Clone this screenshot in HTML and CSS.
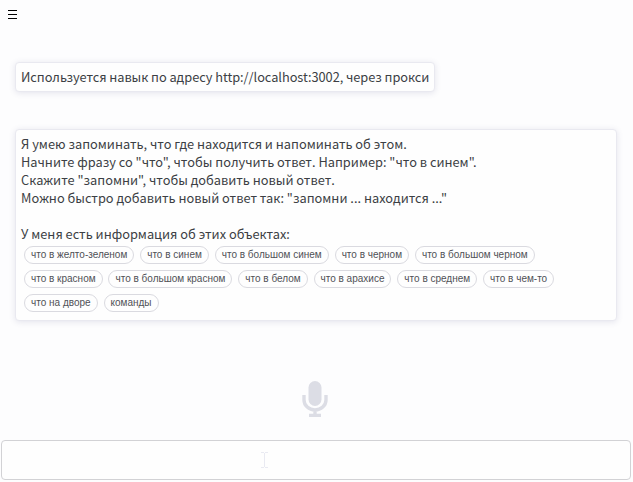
FILE: index.html
```
<!DOCTYPE html>
<html lang="ru">
<head>
<meta charset="utf-8">
<title>Чат</title>
<link rel="stylesheet" href="styles.css">
</head>
<body>
<header class="topbar">
<svg class="menu" viewBox="0 0 11 10" aria-hidden="true"><path d="M1 .5h9M1 4.5h9M1 8.5h9"/></svg>
</header>
<main class="chat">
<div class="message short">Используется навык по адресу http://localhost:3002, через прокси</div>
<div class="message">
<p>Я умею запоминать, что где находится и напоминать об этом.</p>
<p>Начните фразу со "что", чтобы получить ответ. Например: "что в синем".</p>
<p>Скажите "запомни", чтобы добавить новый ответ.</p>
<p>Можно быстро добавить новый ответ так: "запомни ... находится ..."</p>
<p class="info">У меня есть информация об этих объектах:</p>
<div class="chips">
<button>что в желто-зеленом</button><button>что в синем</button><button>что в большом синем</button><button>что в черном</button><button>что в большом черном</button><button>что в красном</button><button>что в большом красном</button><button>что в белом</button><button>что в арахисе</button><button>что в среднем</button><button>что в чем-то</button><button>что на дворе</button><button>команды</button>
</div>
</div>
</main>
<footer class="composer">
<svg class="mic" viewBox="0 0 26 36" aria-hidden="true"><rect x="6.5" width="13" height="25" rx="6.5"/><path d="M2 14v5a11 10 0 0 0 22 0v-5M13 29v5M7 34.5h12"/></svg>
<div class="field"><svg class="caret" viewBox="0 0 7 16" aria-hidden="true"><path d="M0 .5h3M4 .5h3M3.5 1v14M0 15.5h3M4 15.5h3"/></svg></div>
</footer>
</body>
</html>
```
FILE: styles.css
```
* { box-sizing: border-box; }
body {
  margin: 0;
  height: 482px;
  display: flex;
  flex-direction: column;
  overflow: hidden;
  background: #fdfdfe;
  color: #3c3f44;
  font: 12.8px/18px "Noto Sans CJK SC", sans-serif;
}
.topbar { height: 62px; padding: 10px 0 0 7px; }
.menu { display: block; width: 11px; height: 10px; fill: none; stroke: #000; stroke-width: 1; }
.chat { padding: 0 16px 0 15px; display: flex; flex-direction: column; align-items: flex-start; gap: 37px; }
.message {
  width: 602px;
  height: 192px;
  padding: 5px;
  border: 1px solid #e9e9f0;
  border-radius: 4px;
  background: #fefefe;
  box-shadow: 0 1px 6px rgba(70, 70, 130, .14);
  white-space: nowrap;
}
.short { width: 420px; height: 30px; letter-spacing: -.05px; }
p { margin: 0; }
.info { margin-top: 18px; }
.chips { display: flex; flex-wrap: wrap; gap: 6px 5.9px; width: 540px; margin: 3px 0 0 3px; }
.chips button {
  height: 18px;
  padding: 0 6px;
  border: 1px solid #dadae0;
  border-radius: 9px;
  background: #fefefe;
  color: #505156;
  font: 10px/16px "Liberation Sans", Arial, sans-serif;
}
.composer { margin-top: auto; padding: 0 2px 2px 1px; display: flex; flex-direction: column; align-items: center; gap: 23px; }
.mic { width: 26px; height: 36px; margin-right: 2px; fill: #dcdde5; }
.mic path { fill: none; stroke: #dcdde5; stroke-width: 3.4; }
.field { width: 100%; height: 40px; border: 1px solid #d2d2d5; border-radius: 4px; background: #fefefe; padding: 11px 0 0 259px; }
.caret { display: block; width: 7px; height: 16px; fill: none; stroke: #e9eaf2; }
```
